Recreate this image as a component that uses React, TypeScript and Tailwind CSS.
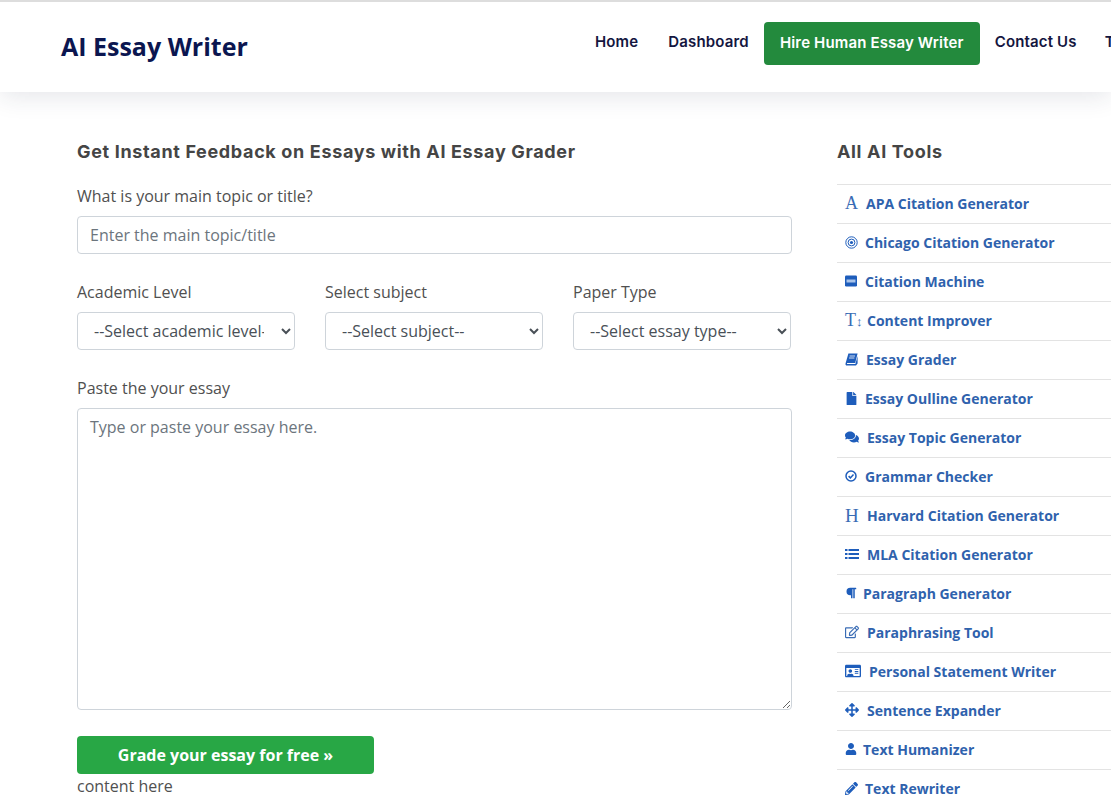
import React from 'react';
import { FaArrowsAlt, FaComments, FaFile, FaParagraph, FaPencilAlt, FaRegEdit, FaRegIdCard, FaUser } from 'react-icons/fa';

const NAV = ['Home', 'Dashboard'];

const serif = "font-['Liberation_Serif',serif] font-normal leading-none text-[#3a6cb5]";

// small drawn icons where the icon packages differ from the picture
const TargetIcon = () => (
  <svg width="13" height="13" viewBox="0 0 13 13" fill="none" stroke="currentColor">
    <circle cx="6.5" cy="6.5" r="5.7" strokeWidth="1" />
    <circle cx="6.5" cy="6.5" r="3.4" strokeWidth="1" />
    <circle cx="6.5" cy="6.5" r="1.6" fill="currentColor" stroke="none" />
  </svg>
);

const MachineIcon = () => (
  <svg width="12" height="12" viewBox="0 0 12 12">
    <rect y="0.5" width="12" height="11" rx="1.2" fill="currentColor" />
    <rect x="1.5" y="4.5" width="9" height="3" fill="#a9c4ea" />
  </svg>
);

const BookIcon = () => (
  <svg width="13" height="13" viewBox="0 0 13 13" fill="currentColor">
    <path d="M3.4 0.5H12.6L10.2 10H2.6C2 10 1.8 10.6 2.2 11H10.4L12.6 3V10.4L11 12.6H2C0.8 12.6 0.2 11.4 0.6 10.2Z" />
    <path d="M4.6 3H10M4 5H9.4" stroke="#fff" strokeWidth="0.8" />
  </svg>
);

const CheckIcon = () => (
  <svg width="12" height="12" viewBox="0 0 12 12" fill="none" stroke="currentColor" strokeWidth="1.5">
    <circle cx="6" cy="6" r="5" />
    <path d="M3.6 6.1L5.4 7.9L8.5 4.5" />
  </svg>
);

const ListIcon = () => (
  <svg width="14" height="12" viewBox="0 0 14 12" fill="currentColor">
    <path d="M0 1H2.5V3H0ZM3.5 1H14V3H3.5ZM0 5H2.5V7H0ZM3.5 5H14V7H3.5ZM0 9H2.5V11H0ZM3.5 9H14V11H3.5Z" />
  </svg>
);

const TOOLS: { label: string; icon: React.ReactNode; gap: string }[] = [
  { label: 'APA Citation Generator', icon: <span className={`${serif} text-[18px]`}>A</span>, gap: 'w-[21px]' },
  { label: 'Chicago Citation Generator', icon: <TargetIcon />, gap: 'w-[20px]' },
  { label: 'Citation Machine', icon: <MachineIcon />, gap: 'w-[20px]' },
  { label: 'Content Improver', icon: <span className={`${serif} text-[18px]`}>T<span className="text-[13px]">↕</span></span>, gap: 'w-[22px]' },
  { label: 'Essay Grader', icon: <BookIcon />, gap: 'w-[21px]' },
  { label: 'Essay Oulline Generator', icon: <FaFile size={13} />, gap: 'w-[20px]' },
  { label: 'Essay Topic Generator', icon: <FaComments size={14} />, gap: 'w-[22px]' },
  { label: 'Grammar Checker', icon: <CheckIcon />, gap: 'w-[20px]' },
  { label: 'Harvard Citation Generator', icon: <span className={`${serif} text-[19px]`}>H</span>, gap: 'w-[22px]' },
  { label: 'MLA Citation Generator', icon: <ListIcon />, gap: 'w-[22px]' },
  { label: 'Paragraph Generator', icon: <FaParagraph size={12} />, gap: 'w-[18px]' },
  { label: 'Paraphrasing Tool', icon: <FaRegEdit size={14} className="text-[#3a6cb5]" />, gap: 'w-[22px]' },
  { label: 'Personal Statement Writer', icon: <FaRegIdCard size={16} />, gap: 'w-[24px]' },
  { label: 'Sentence Expander', icon: <FaArrowsAlt size={14} />, gap: 'w-[22px]' },
  { label: 'Text Humanizer', icon: <FaUser size={12} />, gap: 'w-[18px]' },
  { label: 'Text Rewriter', icon: <FaPencilAlt size={13} />, gap: 'w-[20px]' },
];

function Select({ label, placeholder }: { label: string; placeholder: string }) {
  return (
    <div className="w-[218px]">
      <label className="block h-[24px] leading-[24px] mb-[8px] text-[#505050]">{label}</label>
      <select className="w-full h-[38px] pl-[12px] pr-[14px] bg-white border border-[#ced4da] rounded-[4px] text-[16px] text-[#495057]">
        <option>{placeholder}</option>
      </select>
    </div>
  );
}

export default function App() {
  return (
    <div className="h-[795px] w-[1111px] overflow-hidden bg-white font-['Open_Sans',sans-serif] text-[16px]">
      {/* Header */}
      <header className="h-[92px] border-t-2 border-[#dddddd] bg-white shadow-[0_4px_24px_rgba(30,40,70,0.12)] flex items-start relative">
        <div className="w-[595px] shrink-0 pl-[61px] pt-[24px] text-[25px] leading-[40px] font-bold text-[#0b1650]">AI Essay Writer</div>
        <nav className="flex items-start whitespace-nowrap font-['Inter',sans-serif] text-[15px] tracking-[0.15px] font-semibold text-[#14163f]">
          {NAV.map((n) => (
            <span key={n} className="mr-[30px] pt-[30px] leading-[20px]">{n}</span>
          ))}
          <span className="-ml-[15px] mt-[20px] h-[43px] w-[216px] flex items-center justify-center bg-[#238a3d] text-white rounded-[4px]">Hire Human Essay Writer</span>
          <span className="ml-[15px] mr-[28px] pt-[30px] leading-[20px]">Contact Us</span>
          <span className="pt-[30px] leading-[20px]">Tools</span>
        </nav>
      </header>

      <main className="flex pl-[77px]">
        {/* Form */}
        <div className="w-[715px] shrink-0 pt-[49px]">
          <h2 className="h-[22px] leading-[22px] font-['Inter',sans-serif] text-[18px] tracking-[0.65px] font-bold text-[#454545] whitespace-nowrap">Get Instant Feedback on Essays with AI Essay Grader</h2>
          <label className="block mt-[21px] h-[24px] leading-[24px] mb-[8px] text-[#505050]">What is your main topic or title?</label>
          <input
            placeholder="Enter the main topic/title"
            className="block w-full h-[38px] px-[12px] border border-[#ced4da] rounded-[4px] placeholder:text-[#6c757d] outline-none"
          />
          <div className="flex gap-[30px] mt-[26px]">
            <Select label="Academic Level" placeholder="--Select academic level--" />
            <Select label="Select subject" placeholder="--Select subject--" />
            <Select label="Paper Type" placeholder="--Select essay type--" />
          </div>
          <label className="block mt-[26px] h-[24px] leading-[24px] mb-[8px] text-[#505050]">Paste the your essay</label>
          <textarea
            placeholder="Type or paste your essay here."
            className="block w-full h-[302px] px-[12px] py-[6px] border border-[#ced4da] rounded-[4px] placeholder:text-[#6c757d] outline-none"
          />
          <button className="block mt-[26px] w-[297px] h-[38px] bg-[#28a745] text-white font-bold rounded-[4px]">Grade your essay for free »</button>
          <p className="h-[24px] leading-[24px] text-[#505050]">content here</p>
        </div>

        {/* Sidebar */}
        <aside className="ml-[45px] w-[274px] shrink-0 pt-[49px]">
          <h2 className="h-[22px] leading-[22px] font-['Inter',sans-serif] text-[18px] tracking-[0.65px] font-bold text-[#454545]">All AI Tools</h2>
          <ul className="mt-[21px]">
            {TOOLS.map((t) => (
              <li key={t.label} className="h-[39px] pb-[2px] border-t border-[#e3e3e3] flex items-center pl-[8px] text-[14px] font-bold text-[#2f62ad] whitespace-nowrap">
                <span className={`${t.gap} shrink-0 flex items-center text-[#1e5dbb]`}>{t.icon}</span>
                {t.label}
              </li>
            ))}
          </ul>
        </aside>
      </main>
    </div>
  );
}
